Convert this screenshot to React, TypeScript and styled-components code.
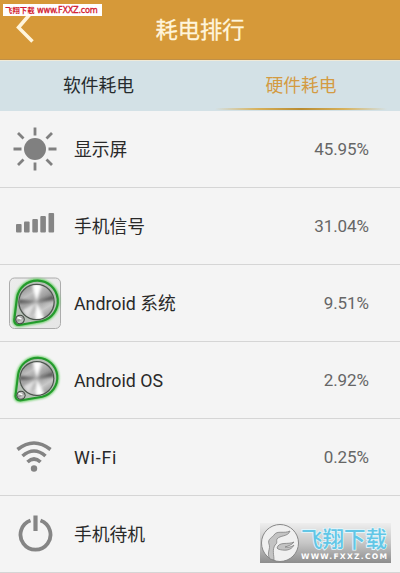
import type { ReactNode } from "react"
import styled, { createGlobalStyle } from "styled-components"

const GlobalStyle = createGlobalStyle`
  body {
    margin: 0;
    background: #f4f4f4;
    font-family: Roboto, "Noto Sans CJK SC", sans-serif;
  }
  * {
    box-sizing: border-box;
  }
`

const Screen = styled.main`
  position: relative;
  width: 400px;
  height: 573px;
  overflow: hidden;
  background: #f4f4f4;
`

const Header = styled.header`
  position: relative;
  display: flex;
  justify-content: center;
  align-items: center;
  height: 60px;
  background: #d69939;
  border-bottom: 1px solid #c09048;
`

const Title = styled.h1`
  margin: 0;
  font-size: 22.3px;
  font-weight: 400;
  line-height: 30px;
  color: #fff5dc;
  -webkit-text-stroke: 0.3px #fff5dc;
`

const BackButton = styled.button`
  position: absolute;
  left: 14px;
  top: 11px;
  padding: 0;
  border: 0;
  background: none;
  line-height: 0;
`

const SiteTag = styled.div`
  position: absolute;
  left: 3px;
  top: 4px;
  display: flex;
  align-items: center;
  width: 99px;
  height: 12px;
  padding-left: 2px;
  background: #fff;
  color: #d31b30;
  white-space: nowrap;
`

const TagName = styled.span`
  width: 32px;
  font: 700 7.4px/12px "Noto Sans CJK SC", sans-serif;
`

const TagUrl = styled.span`
  font: 400 8.2px/12px "DejaVu Sans", sans-serif;
  letter-spacing: -0.25px;
  -webkit-text-stroke: 0.3px #d31b30;
`

const Tabs = styled.nav`
  display: flex;
  height: 51px;
  background: #d3e1e6;
  border-top: 1px solid #f0ead8;
`

const Tab = styled.button<{ $active?: boolean }>`
  flex: ${(props) => props.$active ? '0 0 198px' : '0 0 197px'};
  margin-left: ${(props) => props.$active ? '5px' : '0'};
  display: flex;
  flex-direction: column;
  align-items: center;
  padding: 12px 0 0;
  border: 0;
  background: none;
  font: 400 17.8px/26px Roboto, "Noto Sans CJK SC", sans-serif;
  color: ${(props) => props.$active ? '#d39b42' : '#252b2d'};

  &::after {
    content: '';
    width: 172px;
    height: 2px;
    margin-top: 8.5px;
    background: ${(props) => props.$active
      ? 'linear-gradient(90deg, transparent, #d7b15b 25%, #b98c32 50%, #d7b15b 75%, transparent)'
      : 'none'};
  }
`

const List = styled.ul`
  margin: 0;
  padding: 0;
  list-style: none;
`

const Row = styled.li`
  display: flex;
  align-items: center;
  height: 77px;
  padding-right: 31px;
  border-bottom: 1px solid #d5d5d5;
`

const IconCell = styled.span`
  display: flex;
  justify-content: center;
  width: 74px;
  padding-right: 4px;
`

const Label = styled.span<{ $spacing?: string }>`
  flex: 1;
  padding-top: 1px;
  font-size: 17.8px;
  line-height: 26px;
  letter-spacing: ${(props) => props.$spacing ?? 'normal'};
  color: #292929;
`

const Value = styled.span`
  font-size: 17px;
  line-height: 26px;
  letter-spacing: -0.05px;
  color: #666;
`

const Watermark = styled.div`
  position: absolute;
  left: 260px;
  top: 523px;
  display: flex;
  width: 131px;
  height: 40px;
  background: linear-gradient(#eeeeee, #c6c6c6 50%, #8d8d8d);
`

const WatermarkText = styled.div`
  display: flex;
  flex-direction: column;
  padding: 2px 0 0 1px;
  white-space: nowrap;
`

const WatermarkName = styled.span`
  height: 26px;
  font: 500 21.5px/26px "Noto Sans CJK SC", sans-serif;
  color: #62c6e6;
  -webkit-text-stroke: 1.6px #e3f6fc;
  paint-order: stroke fill;
`

const WatermarkUrl = styled.span`
  font: 700 7.6px/11px "DejaVu Sans", sans-serif;
  letter-spacing: 1.25px;
  color: #fff;
`

function SunIcon() {
  return (
    <svg width="44" height="44" viewBox="0 0 44 44">
      <circle cx="22" cy="22" r="11" fill="#808080" />
      <path
        d="M22 .5v8M22 35.5v8M.5 22h8M35.500 22h8M5 6l5.500 5.500M33.500 11.500L39 6M5 38l5.500-5.500M33.500 32.500L39 38"
        stroke="#808080"
        strokeWidth="2.8"
      />
    </svg>
  )
}

function SignalIcon() {
  return (
    <svg width="44" height="30" viewBox="0 0 44 30">
      <g fill="#858585">
        <rect x="3" y="13" width="5.600" height="8.500" rx="1" />
        <rect x="11" y="10.500" width="5.600" height="11" rx="1" />
        <rect x="19.300" y="8" width="5.600" height="13.500" rx="1" />
        <rect x="27.300" y="5" width="5.600" height="16.500" rx="1" />
        <rect x="35.500" y="2" width="5.600" height="19.500" rx="1" />
      </g>
    </svg>
  )
}

// Brushed metal dial with a green belt running down to the small knob
function DialIcon({ framed }: { framed?: boolean }) {
  const id = framed ? 'framed' : 'plain'
  const belt = 'M6.500 42L9 22A20.500 20.500 0 1 1 34 45L14 48.500C8 50 5.500 47 6.500 42Z'
  return (
    <svg width="54" height="54" viewBox="0 0 54 54">
      <defs>
        <linearGradient id={`${id}-plate`} x2="1" y2="1">
          <stop stopColor="#ececec" />
          <stop offset="1" stopColor="#e6e6e6" />
        </linearGradient>
        <linearGradient id={`${id}-metal`} x1=".2" y1="0" x2=".8" y2="1">
          <stop stopColor="#8d8d8d" />
          <stop offset=".25" stopColor="#c0c0c0" />
          <stop offset=".5" stopColor="#999" />
          <stop offset=".75" stopColor="#c8c8c8" />
          <stop offset="1" stopColor="#909090" />
        </linearGradient>
        <filter id={`${id}-glow`} x="-20%" y="-20%" width="140%" height="140%">
          <feGaussianBlur stdDeviation="1.200" />
        </filter>
        <filter id={`${id}-shine`} x="-20%" y="-20%" width="140%" height="140%">
          <feGaussianBlur stdDeviation="1.500" />
        </filter>
        <clipPath id={`${id}-disc`}>
          <circle cx="28.500" cy="26" r="17" />
        </clipPath>
      </defs>
      {framed && <rect x="1.500" y="2" width="51" height="50.500" rx="5" fill={`url(#${id}-plate)`} stroke="#acacac" />}
      <g transform={framed ? undefined : 'translate(1.500 .5) scale(.96)'}>
        <path d={belt} fill="#b9c3b8" stroke="#65cd62" strokeWidth="4" filter={`url(#${id}-glow)`} />
        <path d={belt} fill="#b7c0b7" stroke="#239a2c" strokeWidth="2.200" />
        <circle cx="28.500" cy="26" r="18.300" fill="#4d554e" />
        <circle cx="28.500" cy="26" r="17" fill={`url(#${id}-metal)`} />
        <g clipPath={`url(#${id}-disc)`}>
          <g filter={`url(#${id}-shine)`}>
            <path d="M28.500 26L24 8H34ZM28.500 26L27 44H37Z" fill="#fff" />
            <path d="M28.500 26L10 23V28ZM28.500 26L47 18V24Z" fill="#5a5a5a" />
            <path d="M28.500 26L14 34L20 42Z" fill="#e0e0e0" />
          </g>
        </g>
        <circle cx="12" cy="43.500" r="4.800" fill="#424842" />
        <circle cx="12" cy="43.500" r="3.700" fill={`url(#${id}-metal)`} />
        <path d="M9.500 41.500l4 1.500" stroke="#fff" strokeWidth="1.500" />
      </g>
    </svg>
  )
}

function WifiIcon() {
  return (
    <svg width="38" height="34" viewBox="0 0 38 34">
      <g fill="none" stroke="#838383" strokeWidth="3.600">
        <path d="M1.500 9.500Q18-3.500 34.500 9.500" />
        <path d="M6.500 16Q18 6 29.500 16" />
        <path d="M11.500 22Q18 16 24.500 22" />
      </g>
      <circle cx="18" cy="28.500" r="3.200" fill="#838383" />
    </svg>
  )
}

function PowerIcon() {
  return (
    <svg width="36" height="38" viewBox="0 0 36 38">
      <path d="M13.500 5.500A15 15 0 1 0 23.500 5.500" fill="none" stroke="#858585" strokeWidth="3.800" />
      <path d="M18.500 .5V16" stroke="#858585" strokeWidth="4.200" />
    </svg>
  )
}

function WatermarkLogo() {
  return (
    <svg width="40" height="40" viewBox="0 0 40 40">
      <circle cx="20" cy="20" r="18.500" fill="#f0f0f0" stroke="#888" />
      <g fill="#c3c3c3" stroke="#808080" strokeWidth=".8">
        <path d="M10 36C6 30 11 26 9 21C7 16 13 14 14 12C17 7 24 11 30 8C28 14 20 12 17 16C16 18 18 20 15 22C12 27 14 32 14 37Z" />
        <path d="M17 25C19 18 28 22 34 19C32 22 28 23 25 24C29 25 33 23 34 22C31 28 24 28 18 26Z" />
      </g>
    </svg>
  )
}

interface UsageItem {
  label: string;
  value?: string;
  spacing?: string;
  icon: ReactNode;
}

const items: UsageItem[] = [
  { label: '显示屏', value: '45.95%', icon: <SunIcon /> },
  { label: '手机信号', value: '31.04%', icon: <SignalIcon /> },
  { label: 'Android 系统', value: '9.51%', icon: <DialIcon framed /> },
  { label: 'Android OS', value: '2.92%', icon: <DialIcon /> },
  { label: 'Wi-Fi', value: '0.25%', spacing: '0.8px', icon: <WifiIcon /> },
  { label: '手机待机', icon: <PowerIcon /> },
]

export default function App() {
  return (
    <Screen>
      <GlobalStyle />
      <Header>
        <BackButton aria-label="返回">
          <svg width="20" height="33" viewBox="0 0 20 33">
            <path d="M17 2L4.500 16.500L18.500 30.500" fill="none" stroke="#fff5dc" strokeWidth="3.500" />
          </svg>
        </BackButton>
        <Title>耗电排行</Title>
        <SiteTag>
          <TagName>飞翔下载</TagName>
          <TagUrl>www.FXXZ.com</TagUrl>
        </SiteTag>
      </Header>
      <Tabs>
        <Tab>软件耗电</Tab>
        <Tab $active>硬件耗电</Tab>
      </Tabs>
      <List>
        {items.map((item) => (
          <Row key={item.label}>
            <IconCell>{item.icon}</IconCell>
            <Label $spacing={item.spacing}>{item.label}</Label>
            {item.value && <Value>{item.value}</Value>}
          </Row>
        ))}
      </List>
      <Watermark>
        <WatermarkLogo />
        <WatermarkText>
          <WatermarkName>飞翔下载</WatermarkName>
          <WatermarkUrl>WWW.FXXZ.COM</WatermarkUrl>
        </WatermarkText>
      </Watermark>
    </Screen>
  )
}
